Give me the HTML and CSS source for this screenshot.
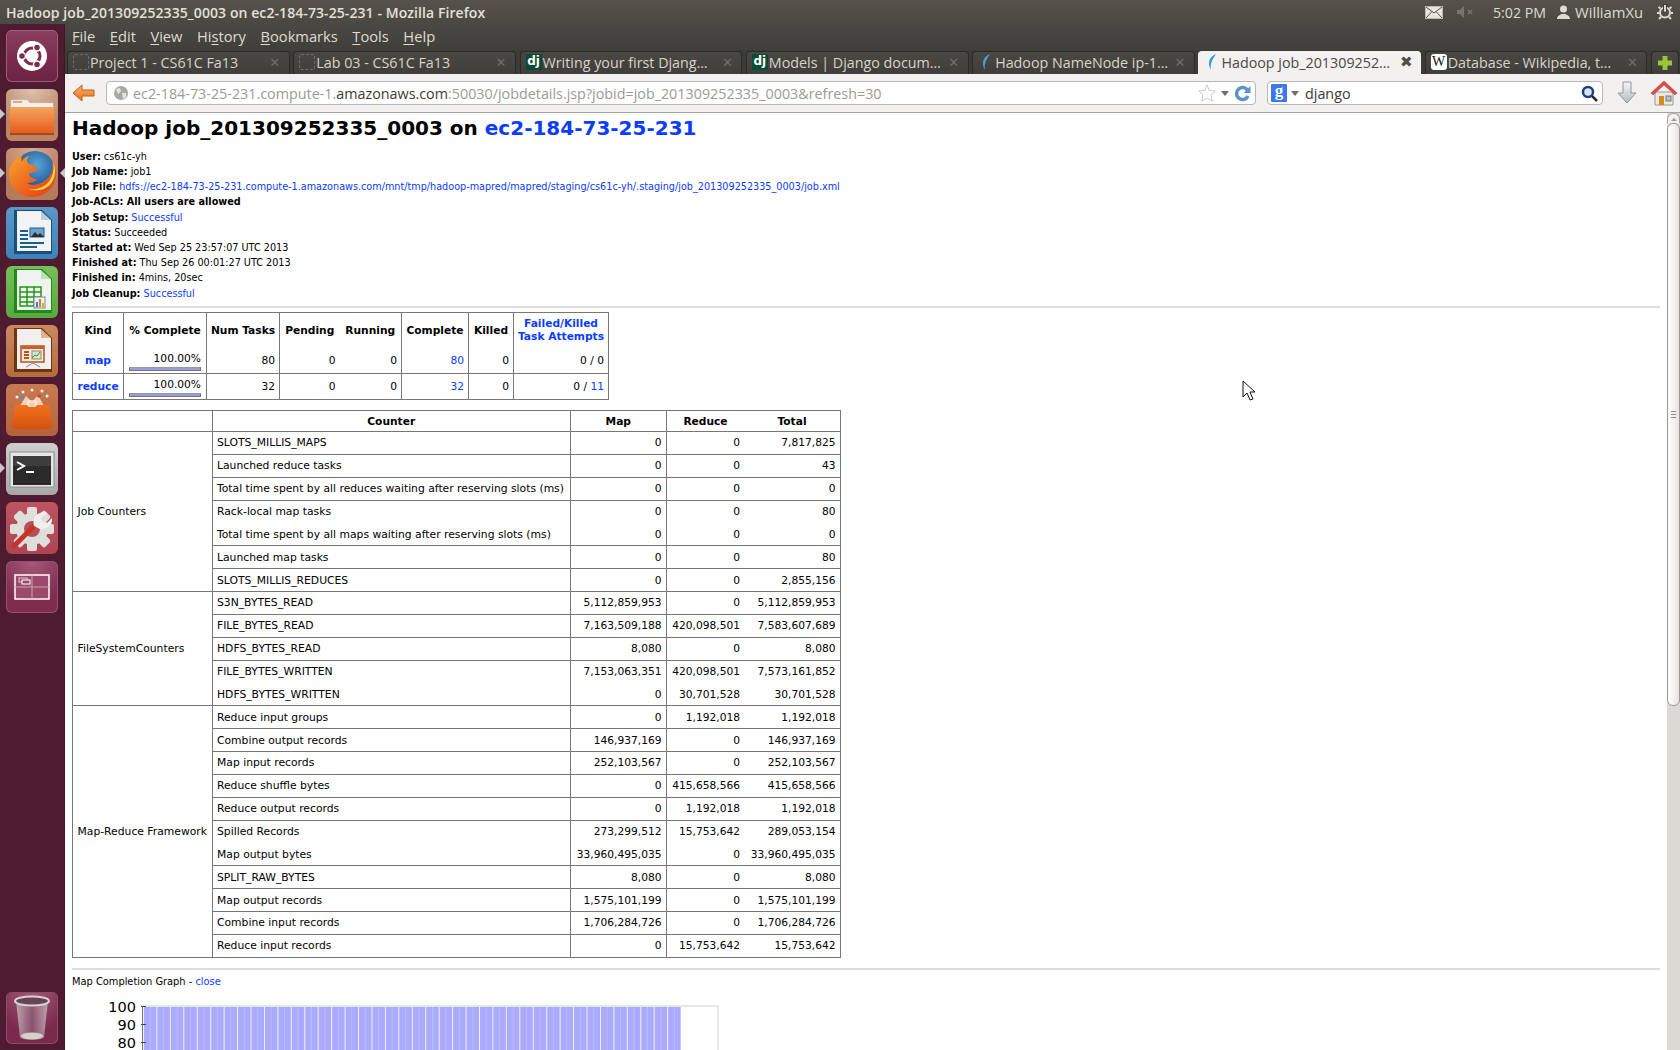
FILE: index.html
```html
<!DOCTYPE html>
<html lang="en">
<head>
<meta charset="utf-8">
<title>Hadoop job_201309252335_0003 on ec2-184-73-25-231 - Mozilla Firefox</title>
<link rel="stylesheet" href="styles.css">
</head>
<body>
<svg class="defs" aria-hidden="true">
  <defs>
    <linearGradient id="gFolder" x1="0" y1="0" x2="0" y2="1"><stop offset="0" stop-color="#f7a35c"/><stop offset="1" stop-color="#e4571a"/></linearGradient>
    <linearGradient id="gBag" x1="0" y1="0" x2="0" y2="1"><stop offset="0" stop-color="#f2711c"/><stop offset="1" stop-color="#d4500e"/></linearGradient>
    <radialGradient id="gFoxGlobe" cx=".55" cy=".35" r=".7"><stop offset="0" stop-color="#5aa6d8"/><stop offset="1" stop-color="#123f8a"/></radialGradient>
    <linearGradient id="gFox" x1="0" y1="0" x2="1" y2="1"><stop offset="0" stop-color="#f9a62e"/><stop offset=".5" stop-color="#ee6a1f"/><stop offset="1" stop-color="#d9401a"/></linearGradient>
    <linearGradient id="gGlass" x1="0" y1="0" x2="1" y2="0"><stop offset="0" stop-color="#c9b8bf"/><stop offset=".5" stop-color="#8d5a70"/><stop offset="1" stop-color="#c9b8bf"/></linearGradient>
    <linearGradient id="gArrow" x1="0" y1="0" x2="0" y2="1"><stop offset="0" stop-color="#f9b36a"/><stop offset="1" stop-color="#e2701f"/></linearGradient>
    <linearGradient id="gDown" x1="0" y1="0" x2="0" y2="1"><stop offset="0" stop-color="#f4f5f5"/><stop offset="1" stop-color="#b4bcc0"/></linearGradient>
    <pattern id="pBars" x="143" y="0" width="13.44" height="60" patternUnits="userSpaceOnUse">
      <rect width="13.44" height="60" fill="#aaaaff"/>
      <rect x="0" width="1" height="60" fill="#f0f0ff"/>
      <rect x="6.72" width="1" height="60" fill="#bcbcff"/>
    </pattern>
  </defs>
</svg>
<div class="screen">
  <header class="topbar">
    <div class="wintitle">Hadoop job_201309252335_0003 on ec2-184-73-25-231 - Mozilla Firefox</div>
    <div class="indicators">
      <svg class="ind-mail" width="18" height="13" viewBox="0 0 18 13"><rect x=".5" y=".5" width="17" height="12" fill="#e8e6df" stroke="#bbb8ae"/><path d="M1 1l8 6 8-6M1 12l6-6.500M17 12l-6-6.500" fill="none" stroke="#55534c"/></svg>
      <svg class="ind-sound" width="18" height="12" viewBox="0 0 18 12"><path d="M0 4h3l4-4v12l-4-4H0z" fill="#77756d"/><path d="M11 4l4 4M15 4l-4 4" stroke="#77756d" stroke-width="1.500"/></svg>
      <span class="ind-clock">5:02 PM</span>
      <svg class="ind-user" width="13" height="14" viewBox="0 0 13 14"><circle cx="6.500" cy="4" r="3.500" fill="#dfdbd2"/><path d="M0 14c0-3 3-4 4.500-5h4C10 10 13 11 13 14z" fill="#dfdbd2"/></svg>
      <span class="ind-name">WilliamXu</span>
      <svg class="ind-gear" width="16" height="16" viewBox="0 0 16 16"><circle cx="8" cy="8.500" r="5" fill="none" stroke="#dfdbd2" stroke-width="2"/><path d="M8 0v6" stroke="#3f3e39" stroke-width="4"/><path d="M8 1v6.500" stroke="#dfdbd2" stroke-width="2"/><path d="M1.500 3l2 1.500M14.500 3l-2 1.500M0 9h2M14 9h2M2 15l2-2M14 15l-2-2" stroke="#dfdbd2" stroke-width="2"/></svg>
    </div>
  </header>
  <div class="desktop">
    <nav class="launcher">
      <div class="tile tile-bfb">
        <svg width="52" height="52" viewBox="0 0 52 52"><circle cx="26" cy="26" r="15" fill="#fff"/><circle cx="26" cy="26" r="8" fill="none" stroke="#7f2b4f" stroke-width="3"/><g fill="#7f2b4f" stroke="#fff" stroke-width="1.500"><circle cx="16" cy="26" r="3.500"/><circle cx="31" cy="17.500" r="3.500"/><circle cx="31" cy="34.500" r="3.500"/></g></svg>
      </div>
      <div class="tile tile-files">
        <span class="pip pip-left"></span>
        <svg width="52" height="52" viewBox="0 0 52 52"><path d="M5 11h16l3 3h23v8H5z" fill="#f4f2ee" stroke="#d9d5cf" stroke-width=".5"/><rect x="7" y="12" width="9" height="2" fill="#e9a27a"/><path d="M4 18h44v26a2 2 0 0 1-2 2H6a2 2 0 0 1-2-2z" fill="url(#gFolder)"/><path d="M4 44h44v2H4z" fill="#a8451a"/></svg>
      </div>
      <div class="tile tile-fox">
        <span class="pip pip-left"></span><span class="pip pip-right"></span>
        <svg width="52" height="52" viewBox="0 0 52 52"><circle cx="29" cy="23" r="20" fill="url(#gFoxGlobe)"/><path d="M13 8C8 11 3 19 3 27c0 13 11 22 23 22 13 0 23-9 24-22 0-6-1-10-4-15 1 6 1 13-4 18-6 6-15 9-21 5 4 0 8-1 10-4-3 0-8-2-8-5 2-2 5-2 8-3 1-3-2-5-4-6-3 0-5-1-6-4 0-2 1-4 3-5-4 0-7 3-8 6-1-3 0-5-1-7z" fill="url(#gFox)"/><path d="M47 14c2 9-1 19-9 24-5 3-11 4-16 3 8 3 19 1 24-7 4-6 4-14 1-20z" fill="#fbd748"/></svg>
      </div>
      <div class="tile tile-writer">
        <svg width="52" height="52" viewBox="0 0 52 52"><path d="M8 3h28l10 10v34H8z" fill="#174f7d"/><path d="M11 4h24v9h10v31H11z" fill="#f1f3f5"/><path d="M35 4l10 9H35z" fill="#b9cfe0"/><g fill="#1d5c8f"><rect x="14" y="23" width="8" height="2"/><rect x="14" y="27" width="8" height="2"/><rect x="14" y="31" width="8" height="2"/><rect x="14" y="35" width="24" height="2"/><rect x="14" y="39" width="17" height="2"/></g><rect x="24" y="21" width="14" height="9" fill="#6ea3c9" stroke="#1d5c8f"/><path d="M25 30l4-5 3 3 2-2 4 4z" fill="#2d2d2d"/></svg>
      </div>
      <div class="tile tile-calc">
        <svg width="52" height="52" viewBox="0 0 52 52"><path d="M8 3h28l10 10v34H8z" fill="#1f8a16"/><path d="M11 4h24v9h10v31H11z" fill="#f1f3f1"/><path d="M35 4l10 9H35z" fill="#bfe0b5"/><g fill="none" stroke="#1d9a12" stroke-width="1.500"><rect x="14" y="21" width="21" height="19"/><path d="M14 26h21M14 31h21M14 36h21M21 21v19M28 21v19"/></g><rect x="28" y="31" width="11" height="11" fill="#eef" stroke="#888"/><rect x="30" y="36" width="2" height="5" fill="#3a7ed0"/><rect x="33" y="33" width="2" height="8" fill="#e37b1c"/><rect x="36" y="37" width="2" height="4" fill="#d8b21e"/></svg>
      </div>
      <div class="tile tile-impress">
        <svg width="52" height="52" viewBox="0 0 52 52"><path d="M8 3h28l10 10v34H8z" fill="#6e3413"/><path d="M11 4h24v9h10v31H11z" fill="#f1f0ee"/><path d="M35 4l10 9H35z" fill="#e4b48f"/><rect x="15" y="21" width="23" height="16" fill="#f7e6da" stroke="#b4541c" stroke-width="1.500"/><rect x="15" y="21" width="23" height="3" fill="#c8622a"/><g fill="#b4541c"><rect x="18" y="26" width="5" height="2"/><rect x="18" y="29" width="5" height="2"/><rect x="18" y="32" width="5" height="2"/></g><rect x="26" y="26" width="9" height="8" fill="#d9e4cc" stroke="#888"/><path d="M26 33l3-3 2 1 3-4" fill="none" stroke="#3f8a2a"/><path d="M27 38l-7 4M27 38l7 4" stroke="#888" stroke-width="1"/></svg>
      </div>
      <div class="tile tile-soft">
        <svg width="52" height="52" viewBox="0 0 52 52"><path d="M14 22l6-10 6 6 6-7 6 11z" fill="#f9e4d2" opacity=".85"/><g fill="#eef2f4"><circle cx="17" cy="8" r="1.500"/><circle cx="26" cy="6" r="1.500"/><circle cx="36" cy="7" r="1.500"/><circle cx="11" cy="13" r="1.500"/><circle cx="41" cy="12" r="1.500"/></g><circle cx="16" cy="13" r="1.800" fill="#4c8ac2"/><circle cx="33" cy="12" r="1.800" fill="#c14a2a"/><path d="M9 21h34l3 23c-9 2-30 2-40 0z" fill="url(#gBag)"/><rect x="22" y="17" width="8" height="5" rx="1" fill="none" stroke="#f5ece5" stroke-width="1.500"/></svg>
      </div>
      <div class="tile tile-term">
        <span class="pip pip-left"></span>
        <svg width="52" height="52" viewBox="0 0 52 52"><rect x="4" y="9" width="44" height="35" fill="#e6e6e6" stroke="#8c8c8c"/><rect x="7" y="13" width="38" height="29" fill="#2a2a2a"/><rect x="7" y="13" width="38" height="10" fill="#3d3d3d"/><path d="M11 19l7 4-7 4" fill="none" stroke="#fff" stroke-width="2"/><rect x="20" y="28" width="8" height="2" fill="#fff"/></svg>
      </div>
      <div class="tile tile-settings">
        <svg width="52" height="52" viewBox="0 0 52 52"><g transform="translate(26 27)"><g fill="#dededb"><rect x="-5" y="-22" width="10" height="44" rx="2"/><rect x="-5" y="-22" width="10" height="44" rx="2" transform="rotate(45)"/><rect x="-5" y="-22" width="10" height="44" rx="2" transform="rotate(90)"/><rect x="-5" y="-22" width="10" height="44" rx="2" transform="rotate(135)"/></g><circle r="16" fill="#dededb"/><circle r="8" fill="#b4505a"/></g><path d="M8 44L30 22" stroke="#c8322a" stroke-width="5" stroke-linecap="round"/><path d="M28 24c-2-6 2-13 9-14 2 0 3 0 4 1l-6 5 1 4 5 1 5-5c1 7-5 12-12 11z" fill="#efefec"/></svg>
      </div>
      <div class="tile tile-work">
        <svg width="52" height="52" viewBox="0 0 52 52"><rect x="9" y="14" width="34" height="24" fill="#9c4a69" stroke="#fff" stroke-width="1.500"/><path d="M26 14v24M9 26h34" stroke="#c9a4b4"/><rect x="13" y="17" width="8" height="4" fill="none" stroke="#cfcfcf"/><rect x="16" y="19" width="8" height="4" fill="#9c4a69" stroke="#fff"/></svg>
      </div>
      <div class="tile tile-trash">
        <svg width="52" height="52" viewBox="0 0 52 52"><path d="M10 9l4 36c1 4 23 4 24 0l4-36z" fill="url(#gGlass)" opacity=".8"/><ellipse cx="26" cy="9" rx="17" ry="4.500" fill="#6a4254" stroke="#d9d4d4" stroke-width="2"/><ellipse cx="26" cy="44" rx="11" ry="3.500" fill="#d6cfd2"/></svg>
      </div>
    </nav>
    <div class="browser">
      <div class="menubar">
        <span class="menu"><u>F</u>ile</span>
        <span class="menu"><u>E</u>dit</span>
        <span class="menu"><u>V</u>iew</span>
        <span class="menu">Hi<u>s</u>tory</span>
        <span class="menu"><u>B</u>ookmarks</span>
        <span class="menu"><u>T</u>ools</span>
        <span class="menu"><u>H</u>elp</span>
      </div>
      <div class="tabstrip">
        <div class="tab"><span class="fav fav-blank"></span><span class="tab-label">Project 1 - CS61C Fa13</span><span class="tab-x">✕</span></div>
        <div class="tab"><span class="fav fav-blank"></span><span class="tab-label">Lab 03 - CS61C Fa13</span><span class="tab-x">✕</span></div>
        <div class="tab"><span class="fav fav-dj">dj</span><span class="tab-label">Writing your first Djang…</span><span class="tab-x">✕</span></div>
        <div class="tab"><span class="fav fav-dj">dj</span><span class="tab-label">Models | Django docum…</span><span class="tab-x">✕</span></div>
        <div class="tab"><span class="fav"><svg width="16" height="16" viewBox="0 0 16 16"><path d="M12 0C5 3 3 9 7 16 6 10 8 6 12 0z" fill="#4a9fd8"/></svg></span><span class="tab-label">Hadoop NameNode ip-1…</span><span class="tab-x">✕</span></div>
        <div class="tab tab-active"><span class="fav"><svg width="16" height="16" viewBox="0 0 16 16"><path d="M12 0C5 3 3 9 7 16 6 10 8 6 12 0z" fill="#3d9ad8"/></svg></span><span class="tab-label">Hadoop job_201309252…</span><span class="tab-x">✖</span></div>
        <div class="tab"><span class="fav fav-w">W</span><span class="tab-label">Database - Wikipedia, t…</span><span class="tab-x">✕</span></div>
        <div class="tab-plus"><svg width="16" height="16" viewBox="0 0 16 16"><path d="M5.500 1h5v4.500H15v5h-4.500V15h-5v-4.500H1v-5h4.500z" fill="#9ac43a"/></svg></div>
      </div>
      <div class="navbar">
        <svg class="nav-back" width="24" height="20" viewBox="0 0 24 20"><path d="M10 2L1 10l9 8v-5h12V7H10z" fill="url(#gArrow)" stroke="#c95d14"/></svg>
        <div class="urlbar">
          <svg class="globe" width="16" height="16" viewBox="0 0 16 16"><circle cx="8" cy="8" r="7" fill="#a7a7a5"/><path d="M3 4l4-1 1 3-3 3zM9 8l4 0 0 4-3 2z" fill="#e5e5e3"/></svg>
          <span class="url-text">ec2-184-73-25-231.compute-1.<b>amazonaws.com</b>:50030/jobdetails.jsp?jobid=job_201309252335_0003&amp;refresh=30</span>
          <svg class="star" width="18" height="18" viewBox="0 0 18 18"><path d="M9 1l2.400 5.500 6 .5-4.500 4 1.400 6L9 14l-5.300 3 1.400-6L.6 7l6-.5z" fill="#fff" stroke="#c8c8c6"/></svg>
          <span class="drop"></span>
          <svg class="reload" width="17" height="17" viewBox="0 0 17 17"><path d="M14 6a6 6 0 1 0 0 5" fill="none" stroke="#5b94c9" stroke-width="3.500"/><path d="M16.500 1v7h-7z" fill="#5b94c9"/></svg>
        </div>
        <div class="searchbar">
          <span class="gbox">g</span>
          <span class="drop drop-search"></span>
          <span class="search-text">django</span>
          <svg class="mag" width="17" height="17" viewBox="0 0 17 17"><circle cx="7" cy="7" r="5" fill="#dbe6f2" stroke="#1f3d8a" stroke-width="2.500"/><path d="M11 11l5 5" stroke="#2b2b2b" stroke-width="2.500"/></svg>
        </div>
        <svg class="nav-down" width="20" height="24" viewBox="0 0 20 24"><path d="M6 1h8v11h5L10 22 1 12h5z" fill="url(#gDown)" stroke="#8f989c"/></svg>
        <svg class="nav-home" width="26" height="26" viewBox="0 0 26 26"><path d="M4 12h18v13H4z" fill="#e9e9e6" stroke="#9a9a96"/><path d="M13 1L0 13l2 2L13 5l11 10 2-2z" fill="#d9504a" stroke="#b03a34" stroke-width=".5"/><rect x="8" y="16" width="5" height="9" fill="#d98a1e"/><rect x="15" y="16" width="5" height="5" fill="#b5c4ce" stroke="#777"/></svg>
      </div>
      <div class="viewport">
        <main class="page">
          <h1 class="job-title">Hadoop job_201309252335_0003 on <a href="#">ec2-184-73-25-231</a></h1>
          <div class="meta">
            <div class="line"><b>User:</b> cs61c-yh</div>
            <div class="line"><b>Job Name:</b> job1</div>
            <div class="line"><b>Job File:</b> <a href="#">hdfs://ec2-184-73-25-231.compute-1.amazonaws.com/mnt/tmp/hadoop-mapred/mapred/staging/cs61c-yh/.staging/job_201309252335_0003/job.xml</a></div>
            <div class="line"><b>Job-ACLs: All users are allowed</b></div>
            <div class="line line-link"><b>Job Setup:</b> <a href="#">Successful</a></div>
            <div class="line"><b>Status:</b> Succeeded</div>
            <div class="line"><b>Started at:</b> Wed Sep 25 23:57:07 UTC 2013</div>
            <div class="line"><b>Finished at:</b> Thu Sep 26 00:01:27 UTC 2013</div>
            <div class="line"><b>Finished in:</b> 4mins, 20sec</div>
            <div class="line line-link"><b>Job Cleanup:</b> <a href="#">Successful</a></div>
          </div>
          <hr class="rule">
          <table class="kinds">
            <colgroup><col class="k1"><col class="k2"><col class="k3"><col class="k4"><col class="k5"><col class="k6"><col class="k7"><col class="k8"></colgroup>
            <tr class="kinds-head">
              <th>Kind</th><th>% Complete</th><th>Num Tasks</th><th class="nb">Pending</th><th class="nb">Running</th><th>Complete</th><th>Killed</th><th><a href="#">Failed/Killed<br>Task Attempts</a></th>
            </tr>
            <tr class="kinds-map">
              <th class="kind"><a href="#">map</a></th>
              <td class="pct"><div class="pct-num">100.00%</div><div class="pct-bar"></div></td>
              <td>80</td><td class="nb">0</td><td class="nb">0</td><td><a href="#">80</a></td><td>0</td><td>0 / 0</td>
            </tr>
            <tr class="kinds-red">
              <th class="kind"><a href="#">reduce</a></th>
              <td class="pct"><div class="pct-num">100.00%</div><div class="pct-bar"></div></td>
              <td>32</td><td class="nb">0</td><td class="nb">0</td><td><a href="#">32</a></td><td>0</td><td>0 / <a href="#">11</a></td>
            </tr>
          </table>
          <table class="counters">
            <colgroup><col class="c1"><col class="c2"><col class="c3"><col class="c4"><col class="c5"></colgroup>
            <tr class="head"><th></th><th>Counter</th><th>Map</th><th>Reduce</th><th class="nb">Total</th></tr>
            <tr><td class="grp" rowspan="7">Job Counters</td><td class="name">SLOTS_MILLIS_MAPS</td><td>0</td><td>0</td><td class="nb">7,817,825</td></tr>
            <tr><td class="name">Launched reduce tasks</td><td>0</td><td>0</td><td class="nb">43</td></tr>
            <tr><td class="name">Total time spent by all reduces waiting after reserving slots (ms)</td><td>0</td><td>0</td><td class="nb">0</td></tr>
            <tr><td class="name">Rack-local map tasks</td><td>0</td><td>0</td><td class="nb">80</td></tr>
            <tr class="cont"><td class="name">Total time spent by all maps waiting after reserving slots (ms)</td><td>0</td><td>0</td><td class="nb">0</td></tr>
            <tr><td class="name">Launched map tasks</td><td>0</td><td>0</td><td class="nb">80</td></tr>
            <tr><td class="name">SLOTS_MILLIS_REDUCES</td><td>0</td><td>0</td><td class="nb">2,855,156</td></tr>
            <tr><td class="grp" rowspan="5">FileSystemCounters</td><td class="name">S3N_BYTES_READ</td><td>5,112,859,953</td><td>0</td><td class="nb">5,112,859,953</td></tr>
            <tr><td class="name">FILE_BYTES_READ</td><td>7,163,509,188</td><td>420,098,501</td><td class="nb">7,583,607,689</td></tr>
            <tr><td class="name">HDFS_BYTES_READ</td><td>8,080</td><td>0</td><td class="nb">8,080</td></tr>
            <tr><td class="name">FILE_BYTES_WRITTEN</td><td>7,153,063,351</td><td>420,098,501</td><td class="nb">7,573,161,852</td></tr>
            <tr class="cont"><td class="name">HDFS_BYTES_WRITTEN</td><td>0</td><td>30,701,528</td><td class="nb">30,701,528</td></tr>
            <tr><td class="grp" rowspan="11">Map-Reduce Framework</td><td class="name">Reduce input groups</td><td>0</td><td>1,192,018</td><td class="nb">1,192,018</td></tr>
            <tr><td class="name">Combine output records</td><td>146,937,169</td><td>0</td><td class="nb">146,937,169</td></tr>
            <tr><td class="name">Map input records</td><td>252,103,567</td><td>0</td><td class="nb">252,103,567</td></tr>
            <tr><td class="name">Reduce shuffle bytes</td><td>0</td><td>415,658,566</td><td class="nb">415,658,566</td></tr>
            <tr><td class="name">Reduce output records</td><td>0</td><td>1,192,018</td><td class="nb">1,192,018</td></tr>
            <tr><td class="name">Spilled Records</td><td>273,299,512</td><td>15,753,642</td><td class="nb">289,053,154</td></tr>
            <tr class="cont"><td class="name">Map output bytes</td><td>33,960,495,035</td><td>0</td><td class="nb">33,960,495,035</td></tr>
            <tr><td class="name">SPLIT_RAW_BYTES</td><td>8,080</td><td>0</td><td class="nb">8,080</td></tr>
            <tr><td class="name">Map output records</td><td>1,575,101,199</td><td>0</td><td class="nb">1,575,101,199</td></tr>
            <tr><td class="name">Combine input records</td><td>1,706,284,726</td><td>0</td><td class="nb">1,706,284,726</td></tr>
            <tr><td class="name">Reduce input records</td><td>0</td><td>15,753,642</td><td class="nb">15,753,642</td></tr>
          </table>
          <hr class="rule rule-low">
          <div class="graph-head">Map Completion Graph - <a href="#">close</a></div>
          <svg class="graph" width="720" height="52" viewBox="0 0 720 52">
            <rect x="143" y="6" width="575" height="60" fill="#fff" stroke="#cfcfcf"/>
            <rect x="143" y="7" width="538" height="45" fill="url(#pBars)"/>
            <path d="M142.500 6v46" stroke="#777"/>
            <path d="M141 6.500h5M141 24.500h5M141 42.500h5" stroke="#444"/>
            <text class="tick" x="136" y="12" text-anchor="end">100</text>
            <text class="tick" x="136" y="30" text-anchor="end">90</text>
            <text class="tick" x="136" y="48" text-anchor="end">80</text>
          </svg>
          <svg class="cursor" width="14" height="21" viewBox="0 0 14 21"><path d="M1 1v16l4-4 3 7 3-1-3-7h5z" fill="#fff" stroke="#111"/></svg>
        </main>
        <div class="scrollbar">
          <div class="sb-btn"><span class="sb-up"></span></div>
          <div class="sb-thumb"><span class="sb-grip"></span></div>
        </div>
      </div>
    </div>
  </div>
</div>
</body>
</html>
```
FILE: styles.css
```css
html, body { margin: 0; padding: 0; height: 100%; overflow: hidden; background: #fff; }
.defs { display: block; width: 0; height: 0; }
.screen { width: 1680px; height: 1050px; display: flex; flex-direction: column; overflow: hidden; font-family: "Open Sans", "Noto Sans", sans-serif; }

.topbar { height: 24px; flex: none; display: flex; align-items: center; background: linear-gradient(#55534b, #4a4842); color: #dfdbd2; padding-left: 6px; }
.wintitle { font-size: 14px; font-weight: 600; white-space: nowrap; color: #e4e0d8; letter-spacing: .08px; }
.indicators { margin-left: auto; display: flex; align-items: center; font-size: 14.200px; color: #dfdbd2; }
.ind-mail { margin-right: 14px; }
.ind-sound { margin-right: 18px; }
.ind-clock { width: 64px; }
.ind-user { margin-right: 5px; }
.ind-name { width: 82px; font-size: 14.800px; }
.ind-gear { margin-right: 7px; }

.desktop { flex: 1; display: flex; min-height: 0; }
.launcher { width: 65px; flex: none; background: #4f1b31; box-sizing: border-box; border-right: 1px solid #431527; padding: 6px 0 6px 6px; display: flex; flex-direction: column; gap: 7px; }
.tile { width: 52px; height: 52px; border-radius: 6px; position: relative; flex: none; }
.tile svg { display: block; }
.tile-bfb { background: linear-gradient(#8a4160, #7a2a4d 60%, #6c2343); box-shadow: inset 0 0 0 1px #9a5c76; }
.tile-files { background: radial-gradient(circle at 50% 0, #dcc0ae, #bb8562 70%); }
.tile-fox { background: radial-gradient(circle at 50% 0, #d4a98e, #b67c5a 70%); }
.tile-writer { background: linear-gradient(#5d97c4, #3f82b8); }
.tile-calc { background: linear-gradient(#78bd5c, #57a83e); }
.tile-impress { background: linear-gradient(#c88a5f, #b56b3e); }
.tile-soft { background: linear-gradient(#c97a50, #b4623b); }
.tile-term { background: linear-gradient(#cfcfcf, #a8a8a8); }
.tile-settings { background: linear-gradient(#bc5560, #ad4552); }
.tile-work { background: radial-gradient(circle at 50% 0, #a55a7b, #7f2c4f 70%); box-shadow: inset 0 0 0 1px #94506c; }
.tile-trash { margin-top: auto; background: radial-gradient(circle at 50% 0, #a05a78, #7b2a4c 70%); box-shadow: inset 0 0 0 1px #8e4a67; }
.pip { position: absolute; top: 20px; width: 0; height: 0; border-top: 5px solid transparent; border-bottom: 5px solid transparent; }
.pip-left { left: -6px; border-left: 5px solid #c9c6c8; }
.pip-right { right: -7px; border-right: 5px solid #c9c6c8; }

.browser { flex: 1; min-width: 0; display: flex; flex-direction: column; }
.menubar { height: 26px; flex: none; box-sizing: border-box; padding: 0 0 2px 7px; display: flex; align-items: center; gap: 14.500px; background: linear-gradient(#4a4842, #403f3a); color: #dfdbd2; font-size: 14.700px; }
.menu u { text-underline-offset: 2px; }

.tabstrip { height: 24px; flex: none; display: flex; gap: 3.500px; padding: 0 1px 0 2px; box-sizing: border-box; background: #3c3b37; align-items: flex-end; }
.tab { flex: 1 1 0; min-width: 0; height: 23px; box-sizing: border-box; display: flex; align-items: center; padding: 0 7px 2px 5px; background: linear-gradient(#4a4843, #3f3e3a); border: 1px solid #2c2b28; border-bottom: none; border-radius: 4px 4px 0 0; color: #d8d4cb; font-size: 14.300px; }
.tab-active { background: #f2f1ef; color: #4a4a46; border-color: #f2f1ef; }
.tab-label { flex: 1; min-width: 0; white-space: nowrap; overflow: hidden; padding-left: 1px; }
.tab-x { width: 14px; flex: none; text-align: center; font-size: 13px; color: #6f6e69; font-family: "DejaVu Sans", sans-serif; }
.tab-active .tab-x { color: #4f4e4a; font-size: 15px; }
.fav { width: 16px; height: 16px; flex: none; display: block; }
.fav svg { display: block; }
.fav-blank { box-sizing: border-box; border: 1px dashed #6e6d68; border-radius: 2px; }
.fav-dj { background: #0c4b33; color: #fff; font: bold 12px/15px "DejaVu Sans", sans-serif; text-align: center; }
.fav-w { background: #fff; color: #111; font: 14px/16px "Liberation Serif", serif; text-align: center; border-radius: 3px; }
.tab-plus { width: 28px; height: 23px; flex: none; margin-left: 0; box-sizing: border-box; background: linear-gradient(#4a4843, #3f3e3a); border: 1px solid #2c2b28; border-bottom: none; border-radius: 4px 4px 0 0; display: flex; align-items: center; justify-content: center; }

.navbar { height: 39px; flex: none; box-sizing: border-box; display: flex; align-items: center; background: #f2f1ef; border-bottom: 1px solid #a5a4a1; padding-left: 7px; }
.nav-back { flex: none; width: 24px; margin-right: 10px; }
.urlbar { width: 1150px; height: 24px; flex: none; box-sizing: border-box; display: flex; align-items: center; background: #fff; border: 1px solid #b8b7b3; border-radius: 4px; padding: 0 4px 0 6px; margin-right: 11px; }
.globe { flex: none; margin-right: 4px; }
.url-text { flex: 1; min-width: 0; white-space: nowrap; overflow: hidden; color: #9b9b97; font-size: 14.330px; }
.url-text b { color: #3c3b37; font-weight: 400; }
.star { flex: none; margin-right: 5px; }
.drop { width: 0; height: 0; flex: none; border-left: 4px solid transparent; border-right: 4px solid transparent; border-top: 5px solid #6d6d69; margin-right: 5px; }
.reload { flex: none; }
.searchbar { width: 336px; height: 24px; flex: none; box-sizing: border-box; display: flex; align-items: center; background: #fff; border: 1px solid #b8b7b3; border-radius: 4px; padding: 0 4px 0 3px; margin-right: 14px; }
.gbox { width: 16px; height: 18px; flex: none; background: #3d78ea; color: #fff; font: bold 17px/14px "Liberation Serif", serif; text-align: center; border-radius: 1px; }
.drop-search { margin: 0 6px 0 4px; }
.search-text { flex: 1; font-size: 14.330px; color: #3c3b37; }
.mag { flex: none; }
.nav-down { flex: none; margin-right: 14px; }
.nav-home { flex: none; }

.viewport { flex: 1; min-height: 0; display: flex; background: #fff; }
.page { flex: 1; min-width: 0; box-sizing: border-box; padding: 0 7px; position: relative; overflow: hidden; font: 10.670px "DejaVu Sans", sans-serif; color: #000; }
.page a { color: #0b3cff; text-decoration: none; }
.job-title { margin: 0; padding-top: 2px; font: bold 20px/26px "DejaVu Sans", sans-serif; white-space: nowrap; }
.meta { margin-top: 8px; font-size: 9.670px; }
.line { height: 15px; line-height: 15px; white-space: nowrap; }
.line-link { margin-top: 1px; }
.rule { height: 2px; border: none; background: #dddddd; margin: 5px 0 4px; }
.rule-low { margin: 10px 0 0; }

.kinds, .counters { border-collapse: collapse; table-layout: fixed; font-size: 10.670px; border: 1px solid #777; }
.kinds th, .kinds td { border-left: 1px solid #777; border-right: 1px solid #777; padding: 0 4px; }
.kinds th { text-align: center; white-space: nowrap; padding: 0 2px; }
.kinds td { text-align: right; }
.kinds .nb + .nb { border-left: none; }
.kinds th.nb, .kinds td.nb { border-right: none; }
.kinds { width: 537px; }
.k1 { width: 51px; } .k2 { width: 83px; } .k3 { width: 73px; } .k4 { width: 60px; } .k5 { width: 62px; } .k6 { width: 67px; } .k7 { width: 45px; } .k8 { width: 95px; }
.kinds-head { height: 35px; }
.kinds-map { height: 26px; }
.kinds-red { height: 26px; border-top: 1px solid #777; }
.kinds .pct { padding: 0 5px; vertical-align: top; }
.kinds-map .pct-num { line-height: 14px; padding-top: 4px; }
.kinds-red .pct-num { line-height: 14px; padding-top: 4px; }
.pct-bar { height: 2px; background: #9a9ae0; border: 1px solid #777; border-top-color: #999; margin-top: 1px; }

.counters { width: 768px; margin-top: 10px; }
.c1 { width: 140px; } .c2 { width: 358px; } .c3 { width: 96px; } .c4 { width: 78px; } .c5 { width: 96px; }
.counters tr { height: 22.870px; border-top: 1px solid #777; }
.counters tr.cont { border-top: none; }
.counters tr.head { height: 21px; }
.counters th, .counters td { padding: 0 4.500px 0 4px; border-left: 1px solid #777; text-align: right; white-space: nowrap; }
.counters th { text-align: center; }
.counters .nb { border-left: none; }
.counters .name, .counters .grp { text-align: left; font-size: 10.770px; }
.counters .grp { padding-left: 4.500px; }

.graph-head { margin-top: 4px; height: 15px; line-height: 15px; font-size: 9.850px; }
.graph { display: block; margin: 11px 0 0 -72px; overflow: hidden; }
.tick { font: 14.500px "DejaVu Sans", sans-serif; fill: #000; }
.cursor { position: absolute; left: 1177px; top: 267px; }

.scrollbar { width: 13px; flex: none; background: #dcdad5; display: flex; flex-direction: column; }
.sb-btn { height: 10px; flex: none; box-sizing: border-box; background: #f2f1ef; border: 1px solid #a5a4a1; border-bottom: none; border-radius: 6px 6px 0 0; display: flex; justify-content: center; padding-top: 4px; }
.sb-up { width: 0; height: 0; border-left: 3px solid transparent; border-right: 3px solid transparent; border-bottom: 3px solid #9b9a96; }
.sb-thumb { height: 583px; flex: none; box-sizing: border-box; background: linear-gradient(90deg, #ffffff, #f4f3f1 50%, #e4e3e0); border: 1px solid #9a9995; border-radius: 6px; display: flex; align-items: center; justify-content: center; }
.sb-grip { width: 5px; height: 5px; border-top: 1px solid #8a8986; border-bottom: 1px solid #8a8986; background: linear-gradient(#8a8986, #8a8986) center/100% 1px no-repeat; }
```
